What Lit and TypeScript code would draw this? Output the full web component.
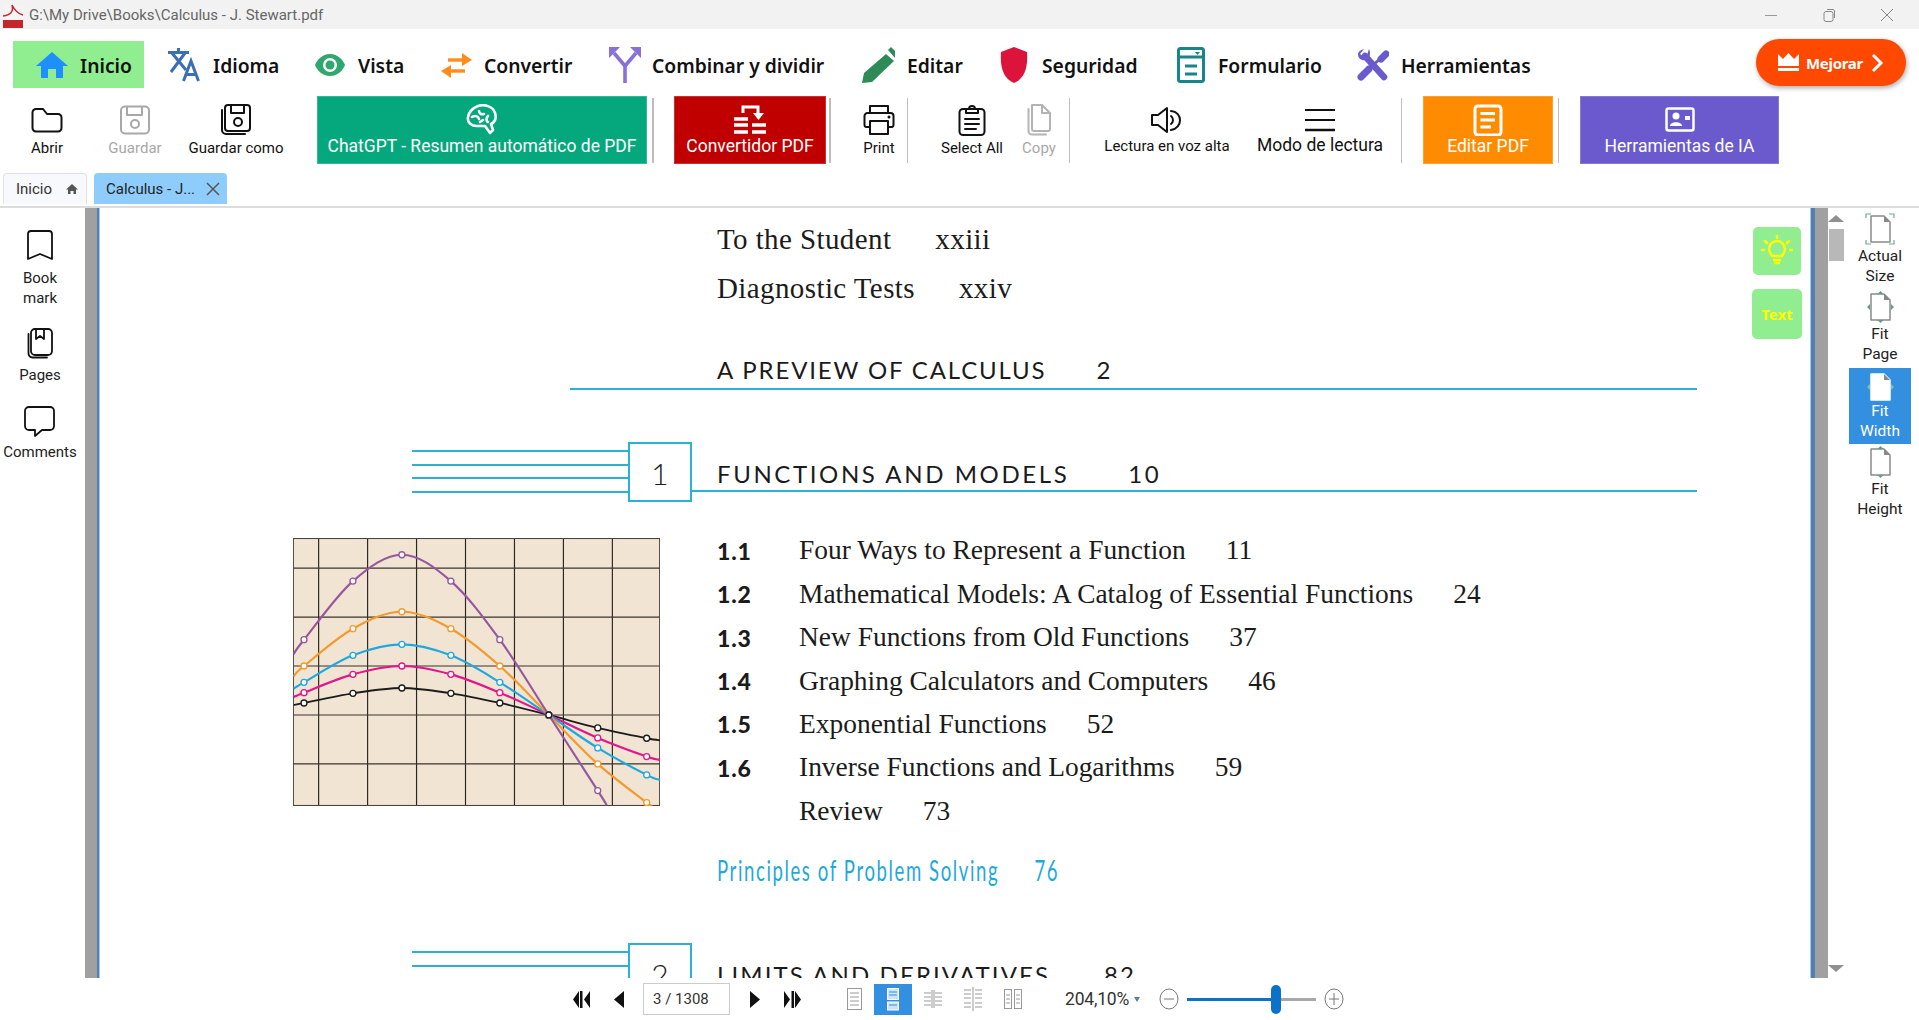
import { LitElement, html, svg, css } from 'lit';
import { customElement } from 'lit/decorators.js';

const icon = (w: number, h: number, body: unknown) =>
  html`<svg width=${w} height=${h} viewBox="0 0 ${w} ${h}" fill="none" stroke-linejoin="round" stroke-linecap="round">${body}</svg>`;

const menuIcons: Record<string, unknown> = {
  home: icon(32, 28, svg`<path fill="#1e8fff" d="M16 1 L32 15 H27 V27 H20 V18 H12 V27 H5 V15 H0 Z"/>`),
  lang: icon(32, 34, svg`<g stroke="#3a6eb5" stroke-width="3" stroke-linecap="butt" stroke-linejoin="miter"><path d="M0 4.500 H21 M10.500 0 V4.500 M4 5 L18 22 M17 5 L3 24"/><path d="M15.500 33 L23 13 L30.500 33 M18 26.500 H28"/></g>`),
  eye: icon(30, 24, svg`<path fill="#2fa76f" fill-rule="evenodd" d="M15 1 C23 1 28 7 30 12 C28 17 23 23 15 23 C7 23 2 17 0 12 C2 7 7 1 15 1Z M15 5 A7 7 0 1 0 15 19 A7 7 0 1 0 15 5Z"/><circle cx="15" cy="12" r="4.500" fill="#2fa76f"/>`),
  conv: icon(31, 28, svg`<g stroke="#ff8c1a" stroke-width="3.400" stroke-linecap="butt" stroke-linejoin="miter"><path d="M7 9 H26"/><path d="M5 20 H24"/></g><path fill="#ff8c1a" d="M21 2 L31 9 L21 15Z M10 14 L0 20 L10 27Z"/>`),
  fork: icon(32, 36, svg`<g fill="none" stroke="#8b6fd8" stroke-width="3.600" stroke-linecap="butt"><path d="M16 36 V19 L5 6"/><path d="M16 19 L27 6"/></g><path fill="#8b6fd8" d="M0 0 H11 L0 11Z M32 0 H21 L32 11Z"/>`),
  pen: icon(33, 36, svg`<path fill="#2e8b57" d="M24 7 L32 14 L10 35 L0 36 L2 26Z"/><path fill="#2e8b57" d="M26 3 L29 0 L33 4 L33 11Z"/>`),
  shield: icon(28, 36, svg`<path fill="#dc143c" d="M14 0 L27 5 C28 20 25 31 14 36 C3 31 0 20 1 5Z"/>`),
  form: icon(31, 36, svg`<rect x="1.500" y="1.500" width="25" height="33" rx="2" stroke="#17868a" stroke-width="3"/><path d="M3 10 H25 M8 19 H20 M8 27 H20" stroke="#17868a" stroke-width="3" stroke-linecap="butt"/><path fill="#17868a" d="M18 5 H23 L20.500 8Z"/>`),
  tools: icon(32, 34, svg`<g stroke="#6a5acd"><path d="M8 8 L27 29" stroke-width="6.500"/><path d="M4 29 L12 21" stroke-width="7"/><path d="M15 18 L24 10" stroke-width="3" stroke-linecap="butt"/><path d="M24 11 L29 6" stroke-width="7"/></g><path fill="#6a5acd" d="M7 1 L3 6 L7 9 L10 7 L12 1 C14 5 13 11 9 12 C5 13 1 11 1 6 C1 4 3 2 7 1Z"/>`),
};

const toolIcons: Record<string, unknown> = {
  folder: icon(32, 26, svg`<path stroke="#111" stroke-width="2" d="M5 2 H12 L16 7 H27 A3.500 3.500 0 0 1 30.500 10.500 V21 A3.500 3.500 0 0 1 27 24.500 H5 A3.500 3.500 0 0 1 1.500 21 V5.500 A3.500 3.500 0 0 1 5 2Z"/>`),
  save: icon(32, 30, svg`<g stroke="#a8a8a8" stroke-width="2"><rect x="2" y="1.500" width="28" height="27" rx="4"/><path d="M8 2 V10 H23 V2"/><circle cx="16" cy="19" r="4"/></g>`),
  saveas: icon(32, 32, svg`<g stroke="#111" stroke-width="2"><rect x="5" y="1" width="25" height="26" rx="3"/><path d="M11 1 V9 H24 V1"/><circle cx="18" cy="18" r="4"/><path d="M2 6 V26 A4 4 0 0 0 6 30 H25" /></g>`),
  brain: icon(32, 32, svg`<g stroke="#fff" stroke-width="2.600"><path d="M12 2 C18 0 27 2 29 9 C31 15 28 19 25 20 L27 26 L24 29 L19 22 H11 C5 22 1 18 2 13 C3 7 7 4 12 2Z"/><path d="M6 13 C9 11 12 12 13 15 M13 7 C13 9 15 11 18 10 M22 12 C20 14 20 17 22 18 M14 18 L17 16"/></g>`),
  conv: icon(34, 32, svg`<path stroke="#fff" stroke-width="3" d="M10 9 V3 H25 V9" stroke-linecap="butt" stroke-linejoin="miter"/><path fill="#fff" d="M20 9 H31 L25.500 16Z"/><g stroke="#fff" stroke-width="3.500" stroke-linecap="butt"><path d="M1 15 H15 M1 21 H15 M1 28 H15 M19 21 H33 M19 28 H33"/></g>`),
  print: icon(32, 32, svg`<g stroke="#111" stroke-width="2"><path d="M7 9 V2 H25 V9"/><path d="M7 23 H3 A2 2 0 0 1 1.500 21 V12 A3 3 0 0 1 4.500 9 H27.500 A3 3 0 0 1 30.500 12 V21 A2 2 0 0 1 29 23 H25"/><path d="M7 17 H25 V30 H7Z"/></g><circle cx="26" cy="13" r="1.500" fill="#111"/>`),
  clip: icon(28, 32, svg`<g stroke="#111" stroke-width="2"><rect x="1.500" y="5" width="25" height="26" rx="3.500"/><path d="M8 5 V9 H20 V5 H17 A3 3 0 0 0 11 5Z"/><path d="M7 15 H21 M7 20 H21 M7 25 H18"/></g>`),
  copy: icon(26, 32, svg`<g stroke="#b4b4b4" stroke-width="2"><path d="M6 1 H16 L24 9 V25 A2 2 0 0 1 22 27 H8 A2 2 0 0 1 6 25Z"/><path d="M16 1 V9 H24"/><path d="M2.500 5 V27 A3.500 3.500 0 0 0 6 30.500 H20"/></g>`),
  speak: icon(32, 28, svg`<g stroke="#111" stroke-width="2"><path d="M1 9 H7 L16 2 V26 L7 19 H1Z"/><path d="M20 10 A5 5 0 0 1 20 18"/><path d="M20 5 C32 6 32 22 20 24"/></g>`),
  lines: icon(31, 24, svg`<path d="M0 2 H30 M0 12 H30" stroke="#111" stroke-width="2" stroke-linecap="butt"/><path d="M0 22 H30" stroke="#111" stroke-width="2.500" stroke-linecap="butt"/>`),
  doc: icon(30, 32, svg`<rect x="2" y="2" width="26" height="29" rx="3" stroke="#fff" stroke-width="3"/><path d="M7.500 9.500 H22 M7.500 16 H22 M7.500 23 H18" stroke="#fff" stroke-width="3" stroke-linecap="butt"/>`),
  idcard: icon(30, 26, svg`<rect x="1.500" y="1.500" width="27" height="22" rx="2" stroke="#fff" stroke-width="2.500"/><circle cx="11" cy="9" r="3.500" fill="#fff"/><path fill="#fff" d="M5 19 C5 14 17 14 17 19Z"/><rect x="20" y="9" width="5" height="4" fill="#fff"/>`),
};

const sideIcons: Record<string, unknown> = {
  bookmark: icon(26, 30, svg`<path stroke="#111" stroke-width="1.800" d="M4 1 H22 A3 3 0 0 1 25 4 V29 L13 24 L1 29 V4 A3 3 0 0 1 4 1Z"/>`),
  pages: icon(26, 31, svg`<g stroke="#111" stroke-width="1.800"><rect x="4" y="1" width="21" height="26" rx="4"/><path d="M9 1 V11 L13 8 L17 11 V1"/><path d="M1.500 6 V25 A4 4 0 0 0 5.500 29.500 H20"/></g>`),
  comment: icon(31, 31, svg`<path stroke="#111" stroke-width="1.800" d="M5 1 H26 A4 4 0 0 1 30 5 V20 A4 4 0 0 1 26 24 H18 L11 30 V24 H5 A4 4 0 0 1 1 20 V5 A4 4 0 0 1 5 1Z"/>`),
};

const page = (extra: unknown, fill = 'none', line = '#8a8a8a') =>
  icon(30, 32, svg`<path fill=${fill} stroke=${line} stroke-width="1.500" d="M6 3 H19 L25 9 V29 H6Z"/><path fill="#888" d="M19 3 L25 9 H19Z"/>${extra}`);

const fitIcons: Record<string, unknown> = {
  actual: page(svg`<path stroke="#6fa898" stroke-width="1.200" stroke-linecap="butt" d="M1 5 V1 H6 M24 1 H29 V5 M1 27 V31 H6 M24 31 H29 V27"/>`),
  page: page(svg`<path fill="#5f9f8a" d="M15.500 0 L18.500 3 H12.500Z M15.500 32 L18.500 29 H12.500Z M2 16 L5 13 V19Z M29 16 L26 13 V19Z"/>`),
  width: page(svg`<path fill="#7fc0a8" d="M2 16 L5 13 V19Z M29 16 L26 13 V19Z"/>`, '#fff', '#fff'),
  height: page(svg`<path fill="#5f9f8a" d="M15.500 0 L18.500 3 H12.500Z M15.500 32 L18.500 29 H12.500Z"/>`),
};

const tools = [
  { kind: 'plain', w: 94, ml: 0, icon: 'folder', label: 'Abrir' },
  { kind: 'plain off', w: 82, ml: 0, icon: 'save', label: 'Guardar' },
  { kind: 'plain', w: 120, ml: 0, icon: 'saveas', label: 'Guardar como' },
  { kind: 'solid green', w: 330, ml: 21, icon: 'brain', label: 'ChatGPT - Resumen automático de PDF' },
  { kind: 'sep wide', w: 2, ml: 5 },
  { kind: 'solid red', w: 152, ml: 20, icon: 'conv', label: 'Convertidor PDF' },
  { kind: 'sep wide', w: 2, ml: 3 },
  { kind: 'plain', w: 56, ml: 20, icon: 'print', label: 'Print' },
  { kind: 'sep', w: 1, ml: 0 },
  { kind: 'plain', w: 74, ml: 27, icon: 'clip', label: 'Select All' },
  { kind: 'plain off', w: 60, ml: 0, icon: 'copy', label: 'Copy' },
  { kind: 'sep', w: 1, ml: 0 },
  { kind: 'plain read', w: 136, ml: 29, icon: 'speak', label: 'Lectura en voz alta' },
  { kind: 'plain big', w: 142, ml: 14, icon: 'lines', label: 'Modo de lectura' },
  { kind: 'sep', w: 1, ml: 10 },
  { kind: 'solid orange', w: 130, ml: 21, icon: 'doc', label: 'Editar PDF' },
  { kind: 'sep wide', w: 1, ml: 5 },
  { kind: 'solid purple', w: 199, ml: 21, icon: 'idcard', label: 'Herramientas de IA' },
];

const menu = [
  { left: 13, w: 131, pad: 23, gap: 12, icon: 'home', label: 'Inicio', on: true },
  { left: 24, w: 147, pad: 0, gap: 13, icon: 'lang', label: 'Idioma' },
  { left: 0, w: 126, pad: 0, gap: 13, icon: 'eye', label: 'Vista' },
  { left: 0, w: 168, pad: 0, gap: 12, icon: 'conv', label: 'Convertir' },
  { left: 0, w: 253, pad: 0, gap: 11, icon: 'fork', label: 'Combinar y dividir' },
  { left: 0, w: 138, pad: 0, gap: 12, icon: 'pen', label: 'Editar' },
  { left: 0, w: 177, pad: 0, gap: 14, icon: 'shield', label: 'Seguridad' },
  { left: 0, w: 180, pad: 0, gap: 10, icon: 'form', label: 'Formulario' },
  { left: 0, w: 170, pad: 0, gap: 12, icon: 'tools', label: 'Herramientas' },
];

const sections = [
  ['1.1', 'Four Ways to Represent a Function', '11'],
  ['1.2', 'Mathematical Models: A Catalog of Essential Functions', '24'],
  ['1.3', 'New Functions from Old Functions', '37'],
  ['1.4', 'Graphing Calculators and Computers', '46'],
  ['1.5', 'Exponential Functions', '52'],
  ['1.6', 'Inverse Functions and Logarithms', '59'],
  ['', 'Review', '73'],
];

const xs = [71, 218, 365, 512, 659, 806, 953, 1100];
const curves = [
  { c: '#1c1c1c', w: 5.500, a: [40, 541], y: [535, 506, 490, 506, 535, 571, 610, 641], z: [1140, 647] },
  { c: '#e0168c', w: 6.500, a: [40, 517], y: [504, 449, 424, 449, 504, 571, 640, 696], z: [1140, 706] },
  { c: '#1fa8dc', w: 6.500, a: [40, 492], y: [473, 392, 359, 392, 473, 571, 670, 751], z: [1140, 766] },
  { c: '#f29a2e', w: 6.500, a: [40, 455], y: [424, 312, 261, 312, 424, 571, 718, 834], z: [1112, 842] },
  { c: '#95589f', w: 6.500, a: [40, 388], y: [345, 169, 90, 169, 345, 571, 798], z: [980, 842] },
];

// catmull-rom through the points, good enough for these smooth curves
const spline = (p: number[][]) => {
  let d = `M${p[0][0]} ${p[0][1]}`;
  for (let i = 0; i < p.length - 1; i++) {
    const a = p[Math.max(i - 1, 0)], b = p[i], c = p[i + 1], e = p[Math.min(i + 2, p.length - 1)];
    d += ` C${b[0] + (c[0] - a[0]) / 6} ${b[1] + (c[1] - a[1]) / 6} ${c[0] - (e[0] - b[0]) / 6} ${c[1] - (e[1] - b[1]) / 6} ${c[0]} ${c[1]}`;
  }
  return d;
};

const graph = () => html`<svg class="graph" width="367" height="268" viewBox="38 40 1102 804">
  <rect x="38" y="40" width="1102" height="804" fill="#f1e4d2"/>
  ${[115, 262, 409, 556, 703, 850, 997].map((x) => svg`<path d="M${x} 40 V844" stroke="#2b2622" stroke-width="3.500"/>`)}
  ${[130, 277, 424, 571, 718].map((y) => svg`<path d="M38 ${y} H1140" stroke="#3a342e" stroke-width="3.500"/>`)}
  <rect x="39" y="41" width="1100" height="802" fill="none" stroke="#4a443e" stroke-width="3.500"/>
  ${curves.map((k) => {
    const pts = k.y.map((y, i) => [xs[i], y]);
    return svg`<path d=${spline([k.a, ...pts, k.z])} fill="none" stroke=${k.c} stroke-width=${k.w}/>
      ${pts.map((p) => svg`<circle cx=${p[0]} cy=${p[1]} r="9" fill="#fff" stroke=${k.c} stroke-width="4"/>`)}`;
  })}
  <circle cx="806" cy="571" r="9" fill="#fff" stroke="#1c1c1c" stroke-width="4"/>
</svg>`;

@customElement('app-root')
export class AppRoot extends LitElement {
  static styles = css`
    :host {
      display: block;
      width: 1919px;
      height: 1020px;
      overflow: hidden;
      background: #fff;
      font-family: Roboto, 'Noto Sans', sans-serif;
      color: #111;
    }
    svg { display: block; flex: none; }

    .title {
      height: 29px;
      background: #f2f2f2;
      display: flex;
      align-items: center;
      padding-left: 2px;
      color: #666;
      font-size: 15px;
    }
    .pdf { margin-right: 5px; }
    .win { margin-left: auto; display: flex; align-items: center; gap: 44px; padding-right: 25px; }

    .menu { height: 67px; display: flex; align-items: center; position: relative; }
    .m { display: flex; align-items: center; height: 47px; margin-top: 4px; font-family: 'Noto Sans', sans-serif; font-size: 19.300px; font-weight: 600; }
    .m.on { background: #90ee90; }
    .m .lbl { padding-top: 2px; }
    .m .ib { display: flex; justify-content: flex-start; align-items: center; }
    .upgrade {
      position: absolute;
      left: 1756px;
      top: 10px;
      width: 150px;
      height: 47px;
      border-radius: 24px;
      background: #ff4800;
      box-shadow: 1px 2px 5px #0005;
      color: #fff;
      display: flex;
      align-items: center;
      justify-content: center;
      gap: 7px;
      font-family: 'Noto Sans', sans-serif;
      font-size: 15px;
      font-weight: 700;
      letter-spacing: -0.3px;
    }

    .tools { height: 68px; display: flex; }
    .t { display: flex; flex-direction: column; align-items: center; flex: none; box-sizing: border-box; white-space: nowrap; }
    .t.plain { padding-top: 7px; font-size: 15px; line-height: 20px; }
    .t.plain .ic { height: 33px; display: flex; align-items: center; }
    .t.plain .lb { margin-top: 2px; }
    .t.off { color: #a8a8a8; }
    .t.read .lb { margin-top: 0; }
    .t.big { font-size: 17.500px; }
    .t.big .lb { margin-top: -1px; }
    .t.solid { padding-top: 6px; color: #fff; font-size: 17.500px; line-height: 22px; border: 1px solid #ffffff30; }
    .t.solid .ic { height: 33px; display: flex; align-items: center; }
    .t.solid .lb { margin-top: -1px; }
    .green { background: #05a77c; }
    .red { background: #c00000; }
    .orange { background: #ff8c00; }
    .purple { background: #6a5acd; }
    .sep { margin: 2px 0 1px; background: #bdbdbd; }

    .tabs { height: 44px; box-sizing: border-box; border-bottom: 2px solid #ddd; display: flex; align-items: flex-start; padding: 9px 0 0 3px; gap: 7px; }
    .tab { height: 31px; box-sizing: border-box; display: flex; align-items: center; font-size: 15px; border-radius: 4px 4px 0 0; }
    .tab.home { width: 84px; background: #f8f9fd; border: 1px solid #e2e2e2; border-bottom: 0; padding: 0 8px 0 12px; justify-content: space-between; color: #333; }
    .tab.doc { width: 133px; background: #8ecdfb; padding: 0 7px 0 12px; justify-content: space-between; color: #222; }

    .main { height: 770px; display: flex; overflow: hidden; }
    .side { width: 85px; flex: none; display: flex; flex-direction: column; align-items: center; padding: 22px 5px 0 0; box-sizing: border-box; font-size: 15px; line-height: 20px; text-align: center; color: #222; }
    .side .b { display: flex; flex-direction: column; align-items: center; margin-bottom: 20px; }
    .side .b span { margin-top: 8px; }
    .side .b:nth-child(2) { margin-bottom: 21px; }
    .side .b:nth-child(2) span { margin-top: 6px; }
    .side .b:nth-child(3) span { margin-top: 5px; }
    .bar-l { width: 12px; background: #a0a0a0; flex: none; }
    .edge { width: 2px; flex: none; background: #4f82b0; border-right: 1px solid #a9c8e6; }
    .bar-r { width: 13px; flex: none; background: #a0a0a0; }
    .edge-r { width: 5px; flex: none; background: #4f82b0; border-left: 1px solid #a9c8e6; box-sizing: border-box; }

    .page { flex: 1; position: relative; overflow: hidden; color: #1b1b1b; font-family: 'Liberation Serif', serif; }
    .front { margin-left: 617px; height: 49px; display: flex; align-items: center; font-size: 29px; letter-spacing: 0.4px; }
    .front b { font-weight: 400; margin-left: 44px; }
    .front:first-child { margin-top: 7px; }
    .head { font-family: Lato, sans-serif; font-size: 24px; letter-spacing: 2.600px; white-space: nowrap; display: flex; }
    .head b { font-weight: 400; }
    .preview { margin-left: 470px; width: 1127px; height: 77px; box-sizing: border-box; padding-left: 147px; border-bottom: 2px solid #2bb0d6; align-items: flex-end; padding-bottom: 4px; letter-spacing: 1.850px; }
    .preview b { margin-left: 50px; }
    .chapter { margin-left: 312px; display: flex; align-items: flex-start; height: 60px; margin-top: 52px; }
    .rules { width: 216px; padding-top: 8px; flex: none; }
    .rules i { display: block; height: 2px; background: #2bb0d6; margin-bottom: 11.500px; }
    .numbox { width: 64px; height: 60px; box-sizing: border-box; border: 2px solid #2bb0d6; flex: none; font-family: Lato, sans-serif; font-size: 30px; font-weight: 300; display: flex; align-items: center; justify-content: center; padding-top: 2px; }
    .chapter .head { flex: 1; height: 50px; box-sizing: border-box; border-bottom: 2px solid #2bb0d6; padding-left: 25px; align-items: flex-end; padding-bottom: 2px; max-width: 1005px; }
    .chapter .head b { margin-left: 59px; }
    .body { display: flex; margin-top: 36px; align-items: flex-start; height: 311px; }
    .graph { margin-left: 193px; }
    .list { margin-left: 57px; margin-top: -9px; font-size: 27.450px; }
    .row { height: 43.450px; display: flex; align-items: center; white-space: nowrap; }
    .row .n { width: 82px; flex: none; font-family: Lato, sans-serif; font-weight: 900; font-size: 23px; letter-spacing: 0.8px; }
    .row b { font-weight: 400; margin-left: 40px; }
    .psolve { margin-left: 617px; height: 40px; display: flex; align-items: center; color: #1fa8dc; font-family: Lato, sans-serif; font-size: 29px; letter-spacing: 2.500px; white-space: nowrap; transform: scaleX(0.640); transform-origin: left; }
    .psolve b { font-weight: 400; margin-left: 55px; }
    .chapter.ch2 { margin-top: 54px; }
    .chapter.ch2 .head { letter-spacing: 2.100px; }
    .chapter.ch2 .head b { margin-left: 54px; }
    .float { position: absolute; background: #90ee90; border-radius: 5px; display: flex; align-items: center; justify-content: center; color: #ffff00; font-family: 'Noto Sans', sans-serif; font-weight: 700; font-size: 15px; }
    .bulb { left: 1653px; top: 19px; width: 48px; height: 48px; }
    .txt { left: 1652px; top: 81px; width: 50px; height: 50px; }

    .scroll { width: 16px; flex: none; display: flex; flex-direction: column; align-items: center; padding-top: 7px; box-sizing: border-box; }
    .up { width: 0; height: 0; border: 8px solid transparent; border-top: 0; border-bottom-width: 7px; border-bottom-color: #909090; }
    .thumb { width: 15px; height: 32px; background: #b8b8b8; margin-top: 7px; }
    .down { width: 0; height: 0; border: 8px solid transparent; border-bottom: 0; border-top-width: 7px; border-top-color: #909090; margin-top: auto; margin-bottom: 6px; }
    .fit { width: 62px; flex: none; margin: 0 8px 0 5px; padding-top: 5px; box-sizing: border-box; font-size: 15.500px; line-height: 20px; text-align: center; color: #222; }
    .f { display: flex; flex-direction: column; align-items: center; height: 77.500px; box-sizing: border-box; }
    .f span { margin-top: 1px; }
    .f.sel { background: #338fe0; color: #fff; height: 76px; padding-top: 3px; margin-bottom: 1.500px; }
    .f.sel span { margin-top: -2px; }

    .status { height: 42px; display: flex; align-items: center; font-size: 15px; color: #333; }
    .first { margin-left: 573px; }
    .g24 { margin-left: 24px; }
    .g19 { margin-left: 19px; }
    .g20 { margin-left: 20px; }
    .g44 { margin-left: 44px; }
    .g11 { margin-left: 11px; }
    .g8 { margin-left: 8px; }
    .input { margin-left: 19px; width: 87px; height: 32px; box-sizing: border-box; border: 1px solid #ccc; display: flex; align-items: center; padding-left: 9px; }
    .vsel { margin-left: 9px; width: 38px; height: 31px; background: #338fe0; display: flex; align-items: center; justify-content: center; }
    .zoom { margin-left: 42px; font-size: 17.500px; letter-spacing: -0.2px; }
    .arrow { margin-left: 5px; width: 0; height: 0; border: 3.500px solid transparent; border-bottom: 0; border-top: 5px solid #5a7fa8; }
    .slider { margin-left: 8px; width: 129px; height: 3px; background: #a8a8a8; position: relative; }
    .slider i { display: block; width: 88px; height: 3px; background: #0a72c8; }
    .slider u { position: absolute; left: 84px; top: -13px; width: 10px; height: 29px; border-radius: 5px; background: #0a72c8; }
  `;

  private view(bars: unknown, w = 20, c = '#999') {
    return html`<svg width=${w} height="24" viewBox="0 0 ${w} 24" fill="none" stroke=${c}>${bars}</svg>`;
  }

  render() {
    const L1 = svg`<rect x="2.500" y="1.500" width="14" height="21"/><path d="M5 6 H14 M5 10 H14 M5 14 H14 M5 18 H14"/>`;
    return html`
      <div class="title">
        <svg class="pdf" width="22" height="26" viewBox="0 0 22 26">
          <rect x="1" y="3" width="20" height="22" fill="#f4f4f4"/>
          <rect x="1" y="18" width="20" height="8" fill="#c4262e"/>
          <path d="M1 14 C8 13 12 10 10 3 C13 9 16 12 21 13" fill="none" stroke="#c4262e" stroke-width="1.500"/>
        </svg>
        G:\\My Drive\\Books\\Calculus - J. Stewart.pdf
        <div class="win">
          <svg width="14" height="14" viewBox="0 0 14 14"><path d="M1 7.500 H13" stroke="#999"/></svg>
          <svg width="14" height="16" viewBox="0 0 14 16" fill="none" stroke="#888"><rect x="2" y="4.500" width="9" height="10" rx="2"/><path d="M5 2.500 H10 A2 2 0 0 1 12.500 5 V11"/></svg>
          <svg width="14" height="14" viewBox="0 0 14 14"><path d="M1 1 L13 13 M13 1 L1 13" stroke="#888"/></svg>
        </div>
      </div>

      <div class="menu">
        ${menu.map(
          (m) => html`<div class="m ${m.on ? 'on' : ''}" style="margin-left:${m.left}px;width:${m.w}px;padding-left:${m.pad}px;box-sizing:border-box;gap:${m.gap}px">
            <span class="ib">${menuIcons[m.icon]}</span><span class="lbl">${m.label}</span>
          </div>`
        )}
        <div class="upgrade">
          <svg width="21" height="19" viewBox="0 0 21 19"><path fill="#fff" d="M0 1 L5 6 L10.500 0 L16 6 L21 1 V13 H0Z"/><rect y="15" width="21" height="3" fill="#fff"/></svg>
          <span>Mejorar</span>
          <svg width="14" height="20" viewBox="0 0 14 20" fill="none" stroke="#fff" stroke-width="3"><path d="M3 2 L11 10 L3 18"/></svg>
        </div>
      </div>

      <div class="tools">
        ${tools.map((t) =>
          t.icon
            ? html`<div class="t ${t.kind}" style="width:${t.w}px;margin-left:${t.ml}px"><span class="ic">${toolIcons[t.icon]}</span><span class="lb">${t.label}</span></div>`
            : html`<div class="t ${t.kind}" style="width:${t.w}px;margin-left:${t.ml}px"></div>`
        )}
      </div>

      <div class="tabs">
        <div class="tab home">Inicio
          <svg width="12" height="12" viewBox="0 0 12 12"><path fill="#555" d="M6 1 L12 6.500 H10 V11 H7.500 V8 H4.500 V11 H2 V6.500 H0Z"/></svg>
        </div>
        <div class="tab doc">Calculus - J...
          <svg width="14" height="14" viewBox="0 0 14 14"><path d="M1 1 L13 13 M13 1 L1 13" stroke="#555" stroke-width="1.500"/></svg>
        </div>
      </div>

      <div class="main">
        <div class="side">
          <div class="b">${sideIcons.bookmark}<span>Book<br />mark</span></div>
          <div class="b">${sideIcons.pages}<span>Pages</span></div>
          <div class="b">${sideIcons.comment}<span>Comments</span></div>
        </div>
        <div class="bar-l"></div><div class="edge"></div>

        <div class="page">
          <div class="front">To the Student<b>xxiii</b></div>
          <div class="front">Diagnostic Tests<b>xxiv</b></div>
          <div class="head preview">A PREVIEW OF CALCULUS<b>2</b></div>
          <div class="chapter">
            <div class="rules"><i></i><i></i><i></i><i></i></div>
            <div class="numbox">1</div>
            <div class="head">FUNCTIONS AND MODELS<b>10</b></div>
          </div>
          <div class="body">
            ${graph()}
            <div class="list">
              ${sections.map(
                (s) => html`<div class="row"><span class="n">${s[0]}</span>${s[1]}<b>${s[2]}</b></div>`
              )}
            </div>
          </div>
          <div class="psolve">Principles of Problem Solving<b>76</b></div>
          <div class="chapter ch2">
            <div class="rules"><i></i><i></i><i></i><i></i></div>
            <div class="numbox">2</div>
            <div class="head">LIMITS AND DERIVATIVES<b>82</b></div>
          </div>

          <div class="float bulb">
            <svg width="32" height="32" viewBox="0 0 32 32" fill="none" stroke="#ffff00" stroke-width="2.500" stroke-linecap="round">
              <path d="M11 21 C9 18 8 16 8 14 A8 8 0 0 1 24 14 C24 16 23 18 21 21 Z"/>
              <path d="M13 25 H19 M14 28 H18 M16 1 V3 M4 6 L6 8 M28 6 L26 8 M1 15 H3 M29 15 H31"/>
            </svg>
          </div>
          <div class="float txt">Text</div>
        </div>

        <div class="edge-r"></div><div class="bar-r"></div>
        <div class="scroll"><div class="up"></div><div class="thumb"></div><div class="down"></div></div>
        <div class="fit">
          <div class="f">${fitIcons.actual}<span>Actual<br />Size</span></div>
          <div class="f">${fitIcons.page}<span>Fit<br />Page</span></div>
          <div class="f sel">${fitIcons.width}<span>Fit<br />Width</span></div>
          <div class="f">${fitIcons.height}<span>Fit<br />Height</span></div>
        </div>
      </div>

      <div class="status">
        <svg class="first" width="17" height="17" viewBox="0 0 17 17"><path fill="#111" d="M0 8.500 L6 0 V17Z M7 0 H9.500 V17 H7Z M11 8.500 L17 0 V17Z"/></svg>
        <svg class="g24" width="10" height="17" viewBox="0 0 10 17"><path fill="#111" d="M0 8.500 L10 0 V17Z"/></svg>
        <div class="input">3 / 1308</div>
        <svg class="g20" width="10" height="17" viewBox="0 0 10 17"><path fill="#111" d="M10 8.500 L0 0 V17Z"/></svg>
        <svg class="g24" width="17" height="17" viewBox="0 0 17 17"><path fill="#111" d="M0 0 L6 8.500 L0 17Z M7.500 0 H10 V17 H7.500Z M11 0 L17 8.500 L11 17Z"/></svg>
        <span class="g44">${this.view(L1)}</span>
        <div class="vsel">
          ${this.view(svg`<rect x="4.500" y="1.500" width="11" height="11" fill="#cfe4f7"/><rect x="4.500" y="15" width="11" height="8" fill="#cfe4f7"/><path d="M6 5 H14 M6 8 H14 M6 18 H14" stroke="#338fe0"/>`, 20, '#fff')}
        </div>
        <span class="g11">${this.view(svg`<path d="M1 6 H8 M1 10 H8 M1 14 H8 M1 18 H8 M12 6 H19 M12 10 H19 M12 14 H19 M12 18 H19 M9 3 V21 M11 3 V21"/>`)}</span>
        <span class="g20">${this.view(svg`<path d="M1 3 H8 M1 7 H8 M1 11 H8 M12 3 H19 M12 7 H19 M12 11 H19 M1 16 H8 M12 16 H19 M1 20 H8 M12 20 H19 M10 0 V24"/>`)}</span>
        <span class="g20">${this.view(svg`<rect x="1.500" y="2.500" width="7" height="19"/><rect x="11.500" y="2.500" width="7" height="19"/><path d="M3 8 H7 M3 12 H7 M3 16 H7 M13 8 H17 M13 12 H17 M13 16 H17"/>`)}</span>
        <span class="zoom">204,10%</span>
        <span class="arrow"></span>
        <svg class="g19" width="20" height="22" viewBox="0 0 20 22" fill="none" stroke="#777"><ellipse cx="10" cy="11" rx="9" ry="10"/><path d="M5 11 H15"/></svg>
        <div class="slider"><i></i><u></u></div>
        <svg class="g8" width="20" height="22" viewBox="0 0 20 22" fill="none" stroke="#777"><ellipse cx="10" cy="11" rx="9" ry="10"/><path d="M5 11 H15 M10 5 V17"/></svg>
      </div>
    `;
  }
}
